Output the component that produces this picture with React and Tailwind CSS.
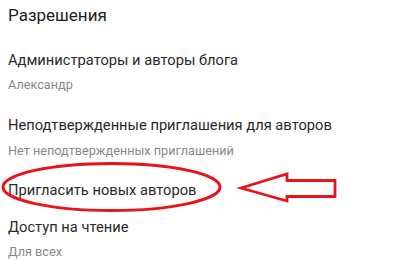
export default function App() {
  const font = { fontFamily: 'Roboto, "Noto Sans", sans-serif' };
  return (
    <div className="relative w-[400px] h-[264px] bg-white overflow-hidden" style={font}>
      <div className="flex flex-col pl-[8px]">
        <div className="mt-[3px] h-[24px] leading-[24px] text-[17px] text-[#202124]">Разрешения</div>
        <div className="mt-[23px] flex flex-col">
          <div className="h-[20px] leading-[20px] text-[14.7px] text-[#2a2a2a]">Администраторы и авторы блога</div>
          <div className="mt-[6px] h-[18px] leading-[18px] text-[12.7px] text-[#888]">Александр</div>
        </div>
        <div className="mt-[21px] flex flex-col">
          <div className="h-[20px] leading-[20px] text-[14.7px] text-[#2a2a2a]">Неподтвержденные приглашения для авторов</div>
          <div className="mt-[7px] h-[18px] leading-[18px] text-[12.7px] text-[#888]">Нет неподтвержденных приглашений</div>
        </div>
        <div className="mt-[20px] flex flex-col">
          <div className="h-[20px] leading-[20px] text-[14.7px] text-[#2a2a2a]">Пригласить новых авторов</div>
        </div>
        <div className="mt-[17px] flex flex-col">
          <div className="h-[20px] leading-[20px] text-[14.7px] text-[#2a2a2a]">Доступ на чтение</div>
          <div className="mt-[6px] h-[18px] leading-[18px] text-[12.7px] text-[#888]">Для всех</div>
        </div>
      </div>
      <svg className="absolute left-0 top-0" width="400" height="264" viewBox="0 0 400 264">
        <ellipse cx="111.5" cy="187" rx="108.5" ry="23.5" fill="none" stroke="#e8141c" strokeWidth="3" />
        <path d="M241 188 L287 174 L287 180.5 L335 180.5 L335 196.5 L287 196.5 L287 201 Z" fill="none" stroke="#e8141c" strokeWidth="2.8" strokeLinejoin="miter" />
      </svg>
    </div>
  );
}
